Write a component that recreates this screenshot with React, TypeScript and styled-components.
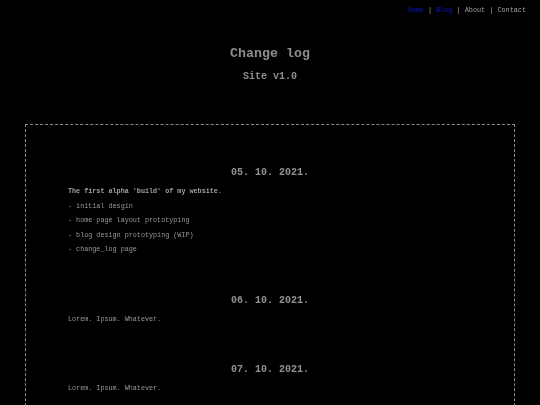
import styled, { createGlobalStyle } from 'styled-components';

const GlobalStyle = createGlobalStyle`
  html, body {
    margin: 0;
    padding: 0;
    background: #000;
  }
  body {
    font-family: "Liberation Mono", "Courier New", monospace;
    color: #8c8c8c;
  }
`;

const Nav = styled.nav`
  height: 20px;
  line-height: 20px;
  display: flex;
  justify-content: flex-end;
  padding-right: 14px;
  font-size: 6.8px;
  color: #a0a0a0;
  white-space: pre;
`;

const Sep = styled.span`
  display: inline-block;
  filter: grayscale(1);
`;

const NavLink = styled.a<{ $active?: boolean }>`
  display: inline-block;
  color: ${(p) => (p.$active ? '#1414b4' : '#a0a0a0')};
  text-decoration: none;
  filter: ${(p) => (p.$active ? 'none' : 'grayscale(1)')};
`;

const Header = styled.header`
  text-align: center;
  padding-top: 24px;
  filter: grayscale(1);
`;

const Title = styled.h1`
  margin: 0;
  font-size: 13.3px;
  line-height: 20px;
  font-weight: bold;
  color: #8e8e8e;
`;

const Subtitle = styled.h2`
  margin: 6px 0 0;
  font-size: 10px;
  line-height: 14px;
  font-weight: bold;
  color: #8e8e8e;
`;

const LogBox = styled.main`
  margin: 40px 25px 0;
  border: 1px dashed #8a8a8a;
  border-bottom: none;
  padding: 41px 42px 60px;
  filter: grayscale(1);
`;

const Entry = styled.section`
  & + & {
    margin-top: 37px;
  }
`;

const EntryDate = styled.h3`
  margin: 0 0 4px;
  text-align: center;
  font-size: 10px;
  line-height: 14px;
  font-weight: bold;
  color: #929292;
`;

const Line = styled.p<{ $strong?: boolean }>`
  margin: 0;
  font-size: 6.75px;
  line-height: 14.5px;
  font-weight: ${(p) => (p.$strong ? 'bold' : 'normal')};
  color: ${(p) => (p.$strong ? '#a0a0a0' : '#999999')};
  white-space: pre;
`;

const entries = [
  {
    date: '05. 10. 2021.',
    intro: "The first alpha 'build' of my website.",
    items: [
      '- initial desgin',
      '- home page layout prototyping',
      '- blog design prototyping (WIP)',
      '- change_log page',
    ],
  },
  { date: '06. 10. 2021.', items: ['Lorem. Ipsum. Whatever.'] },
  { date: '07. 10. 2021.', items: ['Lorem. Ipsum. Whatever.'] },
];

export default function App() {
  return (
    <>
      <GlobalStyle />
      <Nav>
        <NavLink $active href="#">Home</NavLink>
        <Sep>{' | '}</Sep>
        <NavLink $active href="#">Blog</NavLink>
        <Sep>{' | '}</Sep>
        <NavLink href="#">About</NavLink>
        <Sep>{' | '}</Sep>
        <NavLink href="#">Contact</NavLink>
      </Nav>
      <Header>
        <Title>Change log</Title>
        <Subtitle>Site v1.0</Subtitle>
      </Header>
      <LogBox>
        {entries.map((e) => (
          <Entry key={e.date}>
            <EntryDate>{e.date}</EntryDate>
            {e.intro && <Line $strong>{e.intro}</Line>}
            {e.items.map((it) => (
              <Line key={it}>{it}</Line>
            ))}
          </Entry>
        ))}
      </LogBox>
    </>
  );
}
